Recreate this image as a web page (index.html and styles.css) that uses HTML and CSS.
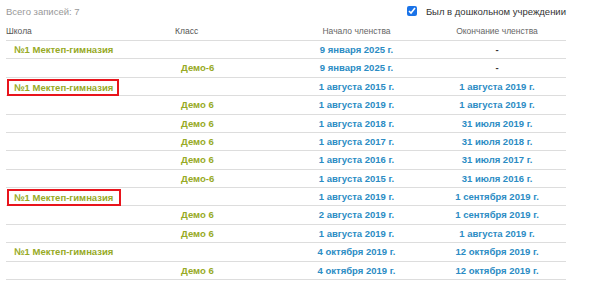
FILE: index.html
```html
<!DOCTYPE html>
<html lang="ru">
<head>
<meta charset="utf-8">
<title>Членство</title>
<link rel="stylesheet" href="styles.css">
</head>
<body>
<div class="page">
  <div class="topbar">
    <span class="total">Всего записей: 7</span>
    <label class="check"><input type="checkbox" checked><span>Был в дошкольном учреждении</span></label>
  </div>
  <table class="grid">
    <colgroup>
      <col class="c1"><col class="c2"><col class="c3"><col class="c4">
    </colgroup>
    <thead>
      <tr><th class="l">Школа</th><th class="l">Класс</th><th>Начало членства</th><th>Окончание членства</th></tr>
    </thead>
    <tbody>
      <tr><td class="school">№1 Мектеп-гимназия</td><td></td><td class="date">9 января 2025 г.</td><td class="dash">-</td></tr>
      <tr><td></td><td class="cls">Демо-6</td><td class="date">9 января 2025 г.</td><td class="dash">-</td></tr>
      <tr><td class="school"><span class="hl">№1 Мектеп-гимназия</span></td><td></td><td class="date">1 августа 2015 г.</td><td class="date">1 августа 2019 г.</td></tr>
      <tr><td></td><td class="cls">Демо 6</td><td class="date">1 августа 2019 г.</td><td class="date">1 августа 2019 г.</td></tr>
      <tr><td></td><td class="cls">Демо 6</td><td class="date">1 августа 2018 г.</td><td class="date">31 июля 2019 г.</td></tr>
      <tr><td></td><td class="cls">Демо 6</td><td class="date">1 августа 2017 г.</td><td class="date">31 июля 2018 г.</td></tr>
      <tr><td></td><td class="cls">Демо 6</td><td class="date">1 августа 2016 г.</td><td class="date">31 июля 2017 г.</td></tr>
      <tr><td></td><td class="cls">Демо-6</td><td class="date">1 августа 2015 г.</td><td class="date">31 июля 2016 г.</td></tr>
      <tr><td class="school"><span class="hl hl2">№1 Мектеп-гимназия</span></td><td></td><td class="date">1 августа 2019 г.</td><td class="date">1 сентября 2019 г.</td></tr>
      <tr><td></td><td class="cls">Демо 6</td><td class="date">2 августа 2019 г.</td><td class="date">1 сентября 2019 г.</td></tr>
      <tr><td></td><td class="cls">Демо 6</td><td class="date">1 августа 2019 г.</td><td class="date">1 августа 2019 г.</td></tr>
      <tr><td class="school">№1 Мектеп-гимназия</td><td></td><td class="date">4 октября 2019 г.</td><td class="date">12 октября 2019 г.</td></tr>
      <tr><td></td><td class="cls">Демо 6</td><td class="date">4 октября 2019 г.</td><td class="date">12 октября 2019 г.</td></tr>
    </tbody>
  </table>
</div>
</body>
</html>
```

FILE: styles.css
```css
html, body {
  margin: 0;
  padding: 0;
  background: #fff;
}
body {
  font-family: "Liberation Sans", Arial, sans-serif;
  font-size: 9.5px;
  color: #333;
}
.page {
  width: 560px;
  padding-left: 6px;
}
.topbar {
  display: flex;
  justify-content: space-between;
  align-items: center;
  height: 22px;
}
.total {
  color: #999;
}
.check {
  display: flex;
  align-items: center;
  color: #333;
}
.check input {
  width: 10px;
  height: 10px;
  margin: 0 9px 0 0;
  accent-color: #1a73e8;
}
.grid {
  width: 560px;
  border-collapse: collapse;
  table-layout: fixed;
}
.c1 { width: 169px; }
.c2 { width: 110px; }
.c3 { width: 143px; }
.c4 { width: 138px; }
.grid th {
  font-weight: normal;
  font-size: 8.5px;
  color: #666;
  text-align: center;
  padding: 0;
  line-height: 18px;
  border-bottom: 1px solid #ddd;
}
.grid th.l {
  text-align: left;
  color: #555;
}
.grid td {
  padding: 0;
  line-height: 17.37px;
  height: 17.37px;
  border-bottom: 1px solid #ddd;
  font-weight: bold;
  white-space: nowrap;
}
.school {
  color: #97aa25;
  padding-left: 8px !important;
}
.cls {
  color: #97aa25;
  padding-left: 6px !important;
}
.date {
  color: #2b8cc4;
  text-align: center;
}
.dash {
  color: #333;
  text-align: center;
}
.hl {
  display: inline-block;
  line-height: 13px;
  padding: 0 4px 0 5px;
  margin-left: -5px;
  outline: 2px solid #e8141c;
  vertical-align: middle;
}
.hl2 {
  padding-right: 6px;
}
```
